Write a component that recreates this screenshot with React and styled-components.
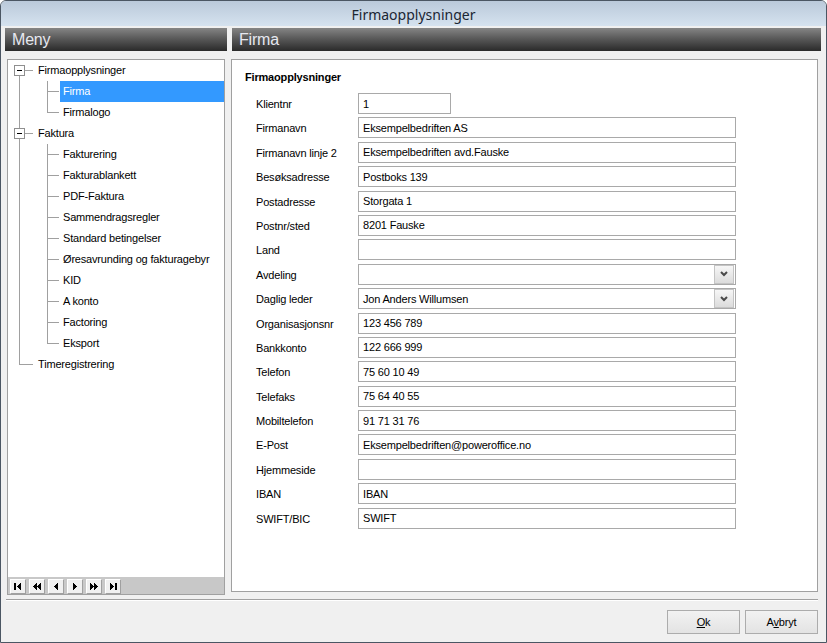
import React from "react";
import styled, { createGlobalStyle } from "styled-components";

const GlobalStyle = createGlobalStyle`
  html, body { margin: 0; padding: 0; background: #ffffff; }
  body { font-family: "Liberation Sans", Arial, sans-serif; font-size: 11px; color: #000; letter-spacing: -0.18px; }
  * { box-sizing: border-box; }
`;

const Window = styled.div`
  width: 827px;
  height: 643px;
  border: 1px solid #4b5663;
  border-radius: 6px 6px 0 0;
  background: #f0f0f0;
  display: flex;
  flex-direction: column;
  overflow: hidden;
`;

const TitleBar = styled.div`
  height: 25px;
  flex: 0 0 25px;
  background: linear-gradient(#bac9da, #d5e2ef);
  display: flex;
  align-items: center;
  justify-content: center;
  font-family: "Noto Sans", "Open Sans", sans-serif;
  font-size: 14px;
  letter-spacing: 0;
  color: #1b2633;
  padding-top: 1px;
`;

const Main = styled.div`
  display: flex;
  gap: 5px;
  padding: 2px 5px 0 4px;
  height: 570px;
  flex: 0 0 570px;
`;

const Column = styled.div`
  display: flex;
  flex-direction: column;
  width: ${p => (p.$w ? `${p.$w}px` : "auto")};
  flex: ${p => (p.$w ? `0 0 ${p.$w}px` : "1 1 auto")};
`;

const Header = styled.div`
  height: 23px;
  flex: 0 0 23px;
  background: linear-gradient(#858585, #5a5a5a 45%, #2a2a2a);
  color: #e6e8f0;
  font-family: "Liberation Sans", Arial, sans-serif;
  font-size: 16px;
  letter-spacing: -0.2px;
  line-height: 23px;
  padding-left: 7px;
`;

const TreePanel = styled.div`
  margin: 8px 2px 0 2px;
  height: 536px;
  border: 1px solid #a0a0a0;
  background: #fff;
  display: flex;
  flex-direction: column;
`;

const Tree = styled.div`
  flex: 1 1 auto;
  display: flex;
  flex-direction: column;
`;

const TreeRow = styled.div`
  display: flex;
  height: 21px;
  flex: 0 0 21px;
`;

const Guide = styled.span`
  position: relative;
  flex: 0 0 ${p => p.$w}px;
  height: 21px;
  &::before {
    content: "";
    display: ${p => (p.$v === "none" ? "none" : "block")};
    position: absolute;
    left: ${p => p.$x}px;
    width: 1px;
    background: #a0a0a0;
    top: ${p => (p.$v === "bottom" ? "10px" : "0")};
    height: ${p => (p.$v === "top" ? "11px" : p.$v === "bottom" ? "11px" : "21px")};
  }
  &::after {
    content: "";
    display: ${p => (p.$h ? "block" : "none")};
    position: absolute;
    left: ${p => p.$x}px;
    right: ${p => p.$hr}px;
    top: 10px;
    height: 1px;
    background: #a0a0a0;
  }
`;

const ExpandBox = styled.span`
  position: absolute;
  z-index: 1;
  left: 6px;
  top: 5px;
  width: 11px;
  height: 11px;
  border: 1px solid #8f8f8f;
  background: #fff;
  &::after {
    content: "";
    position: absolute;
    left: 2px;
    top: 4px;
    width: 5px;
    height: 1px;
    background: #000;
  }
`;

const TreeLabel = styled.span`
  flex: 1 1 auto;
  line-height: 21px;
  padding-left: 3px;
  white-space: nowrap;
  background: ${p => (p.$selected ? "#3399ff" : "transparent")};
  color: ${p => (p.$selected ? "#fff" : "#000")};
`;

const NavBar = styled.div`
  height: 17px;
  flex: 0 0 17px;
  background: #c8c8c8;
  display: flex;
  gap: 3px;
  padding: 2px 0 0 2px;
`;

const NavButton = styled.div`
  width: 16px;
  height: 15px;
  background: #f0f0f0;
  border: 1px solid;
  border-color: #ffffff #a0a0a0 #a0a0a0 #ffffff;
  display: flex;
  align-items: center;
  justify-content: center;
`;

const HeaderRight = styled(Header)``;

const ContentPanel = styled.div`
  margin: 8px 3px 0 -1px;
  height: 533px;
  border: 1px solid #a0a0a0;
  background: #fff;
  padding: 11px 0 0 13px;
`;

const FormTitle = styled.div`
  font-weight: bold;
  font-size: 11px;
  line-height: 13px;
  margin-bottom: 9px;
`;

const FormGrid = styled.div`
  display: grid;
  grid-template-columns: 102px 378px;
  row-gap: 3.4px;
  margin-left: 11px;
  align-items: center;
`;

const Label = styled.div`
  font-size: 11px;
  height: 21px;
  line-height: 23px;
  white-space: nowrap;
`;

const Field = styled.div`
  height: 21px;
  width: ${p => (p.$w ? `${p.$w}px` : "100%")};
  border: 1px solid #a9a9a9;
  background: #fff;
  display: flex;
  align-items: center;
  padding-left: 4px;
  font-size: 11px;
  white-space: nowrap;
`;

const SelectField = styled(Field)`
  padding-right: 1px;
`;

const FieldText = styled.span`
  flex: 1 1 auto;
`;

const DropButton = styled.span`
  width: 20px;
  height: 19px;
  flex: 0 0 20px;
  border: 1px solid #c4c4c4;
  background: linear-gradient(#f6f6f6, #dcdcdc);
  display: flex;
  align-items: center;
  justify-content: center;
`;

const Separator = styled.div`
  margin: 3px 8px 0 5px;
  border-top: 1px solid #a0a0a0;
  border-bottom: 1px solid #ffffff;
  height: 2px;
`;

const Footer = styled.div`
  display: flex;
  justify-content: flex-end;
  gap: 5px;
  padding: 9px 8px 0 0;
`;

const Button = styled.button`
  width: 73px;
  height: 24px;
  border: 1px solid #acacac;
  background: linear-gradient(#f2f2f2, #e3e3e3);
  font-family: "Liberation Sans", Arial, sans-serif;
  font-size: 11px;
  letter-spacing: -0.18px;
  color: #000;
  padding: 0;
  & u { text-decoration: underline; }
`;

const Chevron = () => (
  <svg width="8" height="6" viewBox="0 0 8 6">
    <polyline points="1,1 4,4 7,1" fill="none" stroke="#4a4a4a" strokeWidth="2" />
  </svg>
);

const NavIcon = ({ kind }) => {
  const fill = "#000";
  const shapes = {
    first: (
      <>
        <rect x="3" y="3" width="2" height="7" fill={fill} />
        <polygon points="10,3 6,6.5 10,10" fill={fill} />
      </>
    ),
    prevPage: (
      <>
        <polygon points="7,3 3,6.5 7,10" fill={fill} />
        <polygon points="11,3 7,6.5 11,10" fill={fill} />
      </>
    ),
    prev: <polygon points="9,3 5,6.5 9,10" fill={fill} />,
    next: <polygon points="5,3 9,6.5 5,10" fill={fill} />,
    nextPage: (
      <>
        <polygon points="3,3 7,6.5 3,10" fill={fill} />
        <polygon points="7,3 11,6.5 7,10" fill={fill} />
      </>
    ),
    last: (
      <>
        <polygon points="4,3 8,6.5 4,10" fill={fill} />
        <rect x="9" y="3" width="2" height="7" fill={fill} />
      </>
    ),
  };
  return (
    <svg width="14" height="13" viewBox="0 0 14 13" shapeRendering="crispEdges">
      {shapes[kind]}
    </svg>
  );
};

const tree = [
  { label: "Firmaopplysninger", level: 0, v: "bottom", box: true },
  { label: "Firma", level: 1, v: "full", selected: true },
  { label: "Firmalogo", level: 1, v: "top" },
  { label: "Faktura", level: 0, v: "full", box: true },
  { label: "Fakturering", level: 1, v: "full" },
  { label: "Fakturablankett", level: 1, v: "full" },
  { label: "PDF-Faktura", level: 1, v: "full" },
  { label: "Sammendragsregler", level: 1, v: "full" },
  { label: "Standard betingelser", level: 1, v: "full" },
  { label: "Øresavrunding og fakturagebyr", level: 1, v: "full" },
  { label: "KID", level: 1, v: "full" },
  { label: "A konto", level: 1, v: "full" },
  { label: "Factoring", level: 1, v: "full" },
  { label: "Eksport", level: 1, v: "top" },
  { label: "Timeregistrering", level: 0, v: "top" },
];

const fields = [
  { label: "Klientnr", value: "1", w: 93 },
  { label: "Firmanavn", value: "Eksempelbedriften AS" },
  { label: "Firmanavn linje 2", value: "Eksempelbedriften avd.Fauske" },
  { label: "Besøksadresse", value: "Postboks 139" },
  { label: "Postadresse", value: "Storgata 1" },
  { label: "Postnr/sted", value: "8201 Fauske" },
  { label: "Land", value: "" },
  { label: "Avdeling", value: "", select: true },
  { label: "Daglig leder", value: "Jon Anders Willumsen", select: true },
  { label: "Organisasjonsnr", value: "123 456 789" },
  { label: "Bankkonto", value: "122 666 999" },
  { label: "Telefon", value: "75 60 10 49" },
  { label: "Telefaks", value: "75 64 40 55" },
  { label: "Mobiltelefon", value: "91 71 31 76" },
  { label: "E-Post", value: "Eksempelbedriften@poweroffice.no" },
  { label: "Hjemmeside", value: "" },
  { label: "IBAN", value: "IBAN" },
  { label: "SWIFT/BIC", value: "SWIFT" },
];

export default function App() {
  return (
    <>
      <GlobalStyle />
      <Window>
        <TitleBar>Firmaopplysninger</TitleBar>
        <Main>
          <Column $w={222}>
            <Header>Meny</Header>
            <TreePanel>
              <Tree>
                {tree.map(item => (
                  <TreeRow key={item.label}>
                    {item.level === 0 ? (
                      <Guide $w={27} $x={11} $v={item.v} $h $hr={2}>
                        {item.box && <ExpandBox />}
                      </Guide>
                    ) : (
                      <>
                        <Guide $w={27} $x={11} $v="full" />
                        <Guide $w={25} $x={12} $v={item.v} $h $hr={1} />
                      </>
                    )}
                    <TreeLabel $selected={item.selected}>{item.label}</TreeLabel>
                  </TreeRow>
                ))}
              </Tree>
              <NavBar>
                {["first", "prevPage", "prev", "next", "nextPage", "last"].map(k => (
                  <NavButton key={k}>
                    <NavIcon kind={k} />
                  </NavButton>
                ))}
              </NavBar>
            </TreePanel>
          </Column>
          <Column>
            <HeaderRight>Firma</HeaderRight>
            <ContentPanel>
              <FormTitle>Firmaopplysninger</FormTitle>
              <FormGrid>
                {fields.map(f => (
                  <React.Fragment key={f.label}>
                    <Label>{f.label}</Label>
                    {f.select ? (
                      <SelectField>
                        <FieldText>{f.value}</FieldText>
                        <DropButton>
                          <Chevron />
                        </DropButton>
                      </SelectField>
                    ) : (
                      <Field $w={f.w}>{f.value}</Field>
                    )}
                  </React.Fragment>
                ))}
              </FormGrid>
            </ContentPanel>
          </Column>
        </Main>
        <Separator />
        <Footer>
          <Button><u>O</u>k</Button>
          <Button>A<u>v</u>bryt</Button>
        </Footer>
      </Window>
    </>
  );
}
